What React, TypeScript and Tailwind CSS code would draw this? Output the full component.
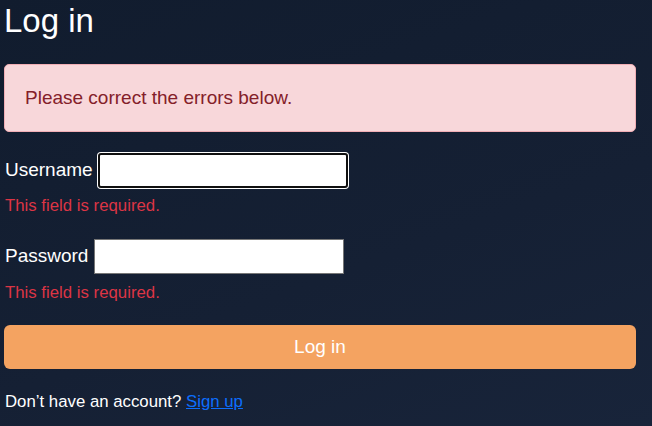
import React from 'react';

export default function App() {
  return (
    <div className="min-h-[426px] bg-[linear-gradient(160deg,#111c2e_0%,#152034_60%,#18243a_100%)] font-['Liberation_Sans',Arial,sans-serif] text-white pl-[4px] pr-[16px]">
      {/* Title */}
      <h1 className="pt-[1px] text-[33px] leading-[40px] font-normal">Log in</h1>

      {/* Error summary */}
      <div className="mt-[23px] rounded-[5px] border border-[#f1aeb5] bg-[#f8d7da] px-5 py-[20px] text-[19px] leading-[26px] text-[#842029]">
        Please correct the errors below.
      </div>

      <form className="mt-[21px]" onSubmit={(e) => e.preventDefault()}>
        {/* Username */}
        <div className="flex items-center gap-[5px] text-[19px]">
          <label htmlFor="username" className="pl-px">Username</label>
          <input
            id="username"
            type="text"
            className="h-[35px] w-[250px] rounded-[3px] border-2 border-[#101010] bg-white text-black shadow-[0_0_0_1px_#ffffff] outline-none"
          />
        </div>
        <p className="mt-[5px] text-[16.8px] leading-[25px] text-[#dc3545] pl-px">This field is required.</p>

        {/* Password */}
        <div className="mt-[21px] flex items-center gap-[6px] text-[19px]">
          <label htmlFor="password" className="pl-px">Password</label>
          <input
            id="password"
            type="password"
            className="h-[35px] w-[250px] border border-[#767676] bg-white text-black outline-none"
          />
        </div>
        <p className="mt-[6px] text-[16.8px] leading-[25px] text-[#dc3545] pl-px">This field is required.</p>

        <button
          type="submit"
          className="mt-[20px] flex h-[44px] w-full items-center justify-center rounded-[6px] bg-[#f4a361] text-[19px] text-white"
        >
          Log in
        </button>
      </form>

      <p className="mt-[20px] text-[16.8px] leading-[25px] pl-px">
        Don’t have an account?{' '}
        <a href="#" className="text-[#0d6efd] underline">Sign up</a>
      </p>
    </div>
  );
}
